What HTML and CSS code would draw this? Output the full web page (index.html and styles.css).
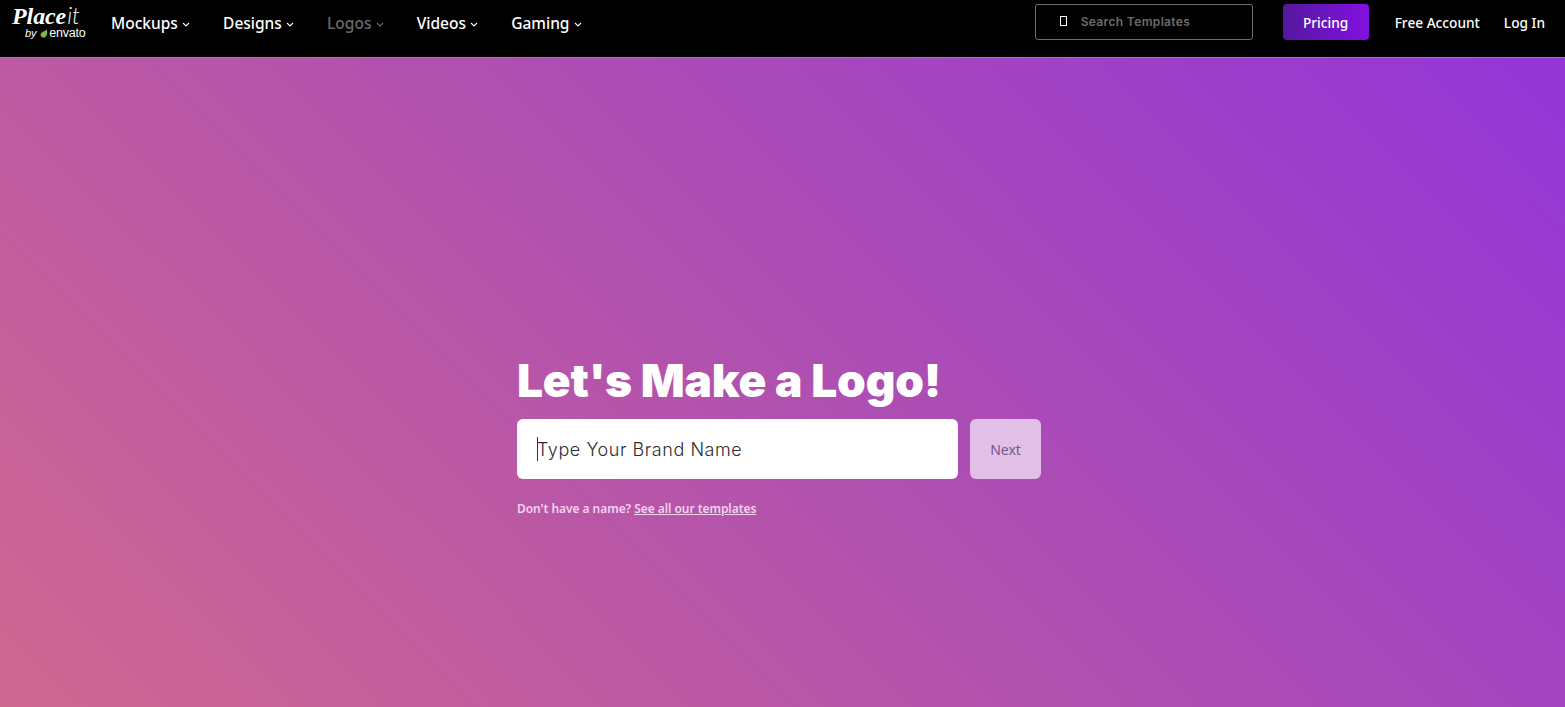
FILE: index.html
```html
<!DOCTYPE html>
<html lang="en">
<head>
    <meta charset="UTF-8">
    <meta name="viewport" content="width=device-width, initial-scale=1.0">
    <title>Let's Make a Logo!</title>
    <link rel="stylesheet" href="styles.css">
</head>
<body>
    <header class="topbar">
        <a class="logo" href="#">
            <span class="logo-main"><b>Place</b><i>it</i></span>
            <span class="logo-sub"><i>by</i><svg class="leaf" width="8" height="9" viewBox="0 0 8 9"><path d="M6.8 0.4C7.8 3.6 7 8.4 3.6 8.6C1.4 8.7 0.2 7 0.7 5C1.3 2.6 4.6 2.6 6.8 0.4Z" fill="#82b541"/></svg>envato</span>
        </a>
        <nav class="main-nav">
            <a href="#">Mockups <svg class="chev" width="8" height="5" viewBox="0 0 8 5"><path d="M1 1l3 3 3-3" fill="none" stroke="currentColor" stroke-width="1.1"/></svg></a>
            <a href="#">Designs <svg class="chev" width="8" height="5" viewBox="0 0 8 5"><path d="M1 1l3 3 3-3" fill="none" stroke="currentColor" stroke-width="1.1"/></svg></a>
            <a href="#" class="muted">Logos <svg class="chev" width="8" height="5" viewBox="0 0 8 5"><path d="M1 1l3 3 3-3" fill="none" stroke="currentColor" stroke-width="1.1"/></svg></a>
            <a href="#">Videos <svg class="chev" width="8" height="5" viewBox="0 0 8 5"><path d="M1 1l3 3 3-3" fill="none" stroke="currentColor" stroke-width="1.1"/></svg></a>
            <a href="#">Gaming <svg class="chev" width="8" height="5" viewBox="0 0 8 5"><path d="M1 1l3 3 3-3" fill="none" stroke="currentColor" stroke-width="1.1"/></svg></a>
        </nav>
        <div class="search-box">
            <span class="missing-glyph"></span>
            <span class="search-text">Search Templates</span>
        </div>
        <a class="pricing" href="#">Pricing</a>
        <a class="top-link account" href="#">Free Account</a>
        <a class="top-link login" href="#">Log In</a>
    </header>
    <main class="hero">
        <div class="hero-inner">
            <h1>Let's Make a Logo!</h1>
            <div class="brand-row">
                <div class="brand-input"><span class="caret"></span>Type Your Brand Name</div>
                <button class="next-btn">Next</button>
            </div>
            <p class="no-name">Don't have a name? <a href="#">See all our templates</a></p>
        </div>
    </main>
</body>
</html>
```
FILE: styles.css
```css
* {
    box-sizing: border-box;
}

body {
    margin: 0;
    height: 707px;
    overflow: hidden;
    font-family: "Noto Sans", "Open Sans", sans-serif;
    display: flex;
    flex-direction: column;
}

a {
    color: inherit;
    text-decoration: none;
}

.topbar {
    height: 57px;
    background-color: #000000;
    color: #ffffff;
    display: flex;
    align-items: flex-start;
    flex-shrink: 0;
    padding-right: 20px;
}

.logo {
    width: 111px;
    padding: 4px 0 0 12px;
    display: flex;
    flex-direction: column;
}

.logo-main {
    font-family: "Liberation Serif", serif;
    font-size: 24px;
    line-height: 22px;
    letter-spacing: -0.1px;
}

.logo-main b {
    font-style: italic;
}

.logo-main i {
    font-family: "Lato", sans-serif;
    font-weight: 300;
    font-size: 23px;
    padding-left: 1px;
}

.logo-sub {
    font-family: "Liberation Sans", sans-serif;
    font-size: 12.5px;
    line-height: 11px;
    margin-top: 1px;
    padding-left: 13px;
    letter-spacing: -0.2px;
    display: flex;
    align-items: center;
}

.logo-sub i {
    font-size: 11px;
    font-weight: 400;
    margin-right: 4px;
}

.leaf {
    margin-right: 1px;
}

.main-nav {
    display: flex;
    gap: 33.2px;
    padding-top: 12px;
    font-size: 15.5px;
    font-weight: 500;
    line-height: 22px;
}

.main-nav .muted {
    color: #6a6a6a;
}

.chev {
    vertical-align: 2px;
}

.search-box {
    width: 218px;
    height: 36px;
    margin: 4px 0 0 auto;
    border: 1px solid #6e6e6e;
    border-radius: 3px;
    display: flex;
    align-items: center;
    padding: 0 0 2px 24px;
    gap: 14px;
}

.missing-glyph {
    width: 7px;
    height: 10px;
    border: 1px solid #ffffff;
}

.search-text {
    font-family: "Inter", sans-serif;
    font-size: 12px;
    font-weight: 600;
    color: #6b6b6b;
    letter-spacing: 0.35px;
}

.pricing {
    width: 86px;
    height: 36px;
    margin: 4px 0 0 30px;
    border-radius: 4px;
    background: linear-gradient(90deg, #53189f, #8410e2);
    display: flex;
    align-items: center;
    justify-content: center;
    font-size: 13.7px;
    font-weight: 500;
}

.top-link {
    font-size: 13.7px;
    font-weight: 500;
    line-height: 22px;
    padding-top: 12px;
}

.account {
    margin-left: 26px;
}

.login {
    margin-left: 24px;
}

.hero {
    flex: 1;
    border-top: 1px solid #b46cc0;
    background: linear-gradient(45deg, #d06890 0%, #b050b0 50%, #9335d8 100%);
    padding: 295px 0 0 517px;
}

h1 {
    margin: 0;
    font-family: "Inter", sans-serif;
    font-size: 46px;
    font-weight: 900;
    line-height: 54px;
    color: #ffffff;
    letter-spacing: -0.2px;
}

.brand-row {
    display: flex;
    gap: 12px;
    margin-top: 12px;
}

.brand-input {
    width: 441px;
    height: 60px;
    background-color: #ffffff;
    border-radius: 6px;
    display: flex;
    align-items: center;
    padding-left: 20px;
    font-family: "Inter", sans-serif;
    font-size: 18px;
    font-weight: 300;
    color: #2e2e2e;
    letter-spacing: 0.55px;
}

.caret {
    width: 1px;
    height: 24px;
    margin-right: -1px;
    background-color: #333333;
}

.next-btn {
    width: 71px;
    height: 60px;
    border: none;
    border-radius: 6px;
    background-color: #e2bfe6;
    color: #74588a;
    font-family: "Noto Sans", sans-serif;
    font-size: 14px;
}

.no-name {
    margin: 21px 0 0;
    font-size: 12px;
    line-height: 17px;
    font-weight: 600;
    color: #f3d3ee;
    letter-spacing: -0.05px;
}

.no-name a {
    text-decoration: underline;
}
```
